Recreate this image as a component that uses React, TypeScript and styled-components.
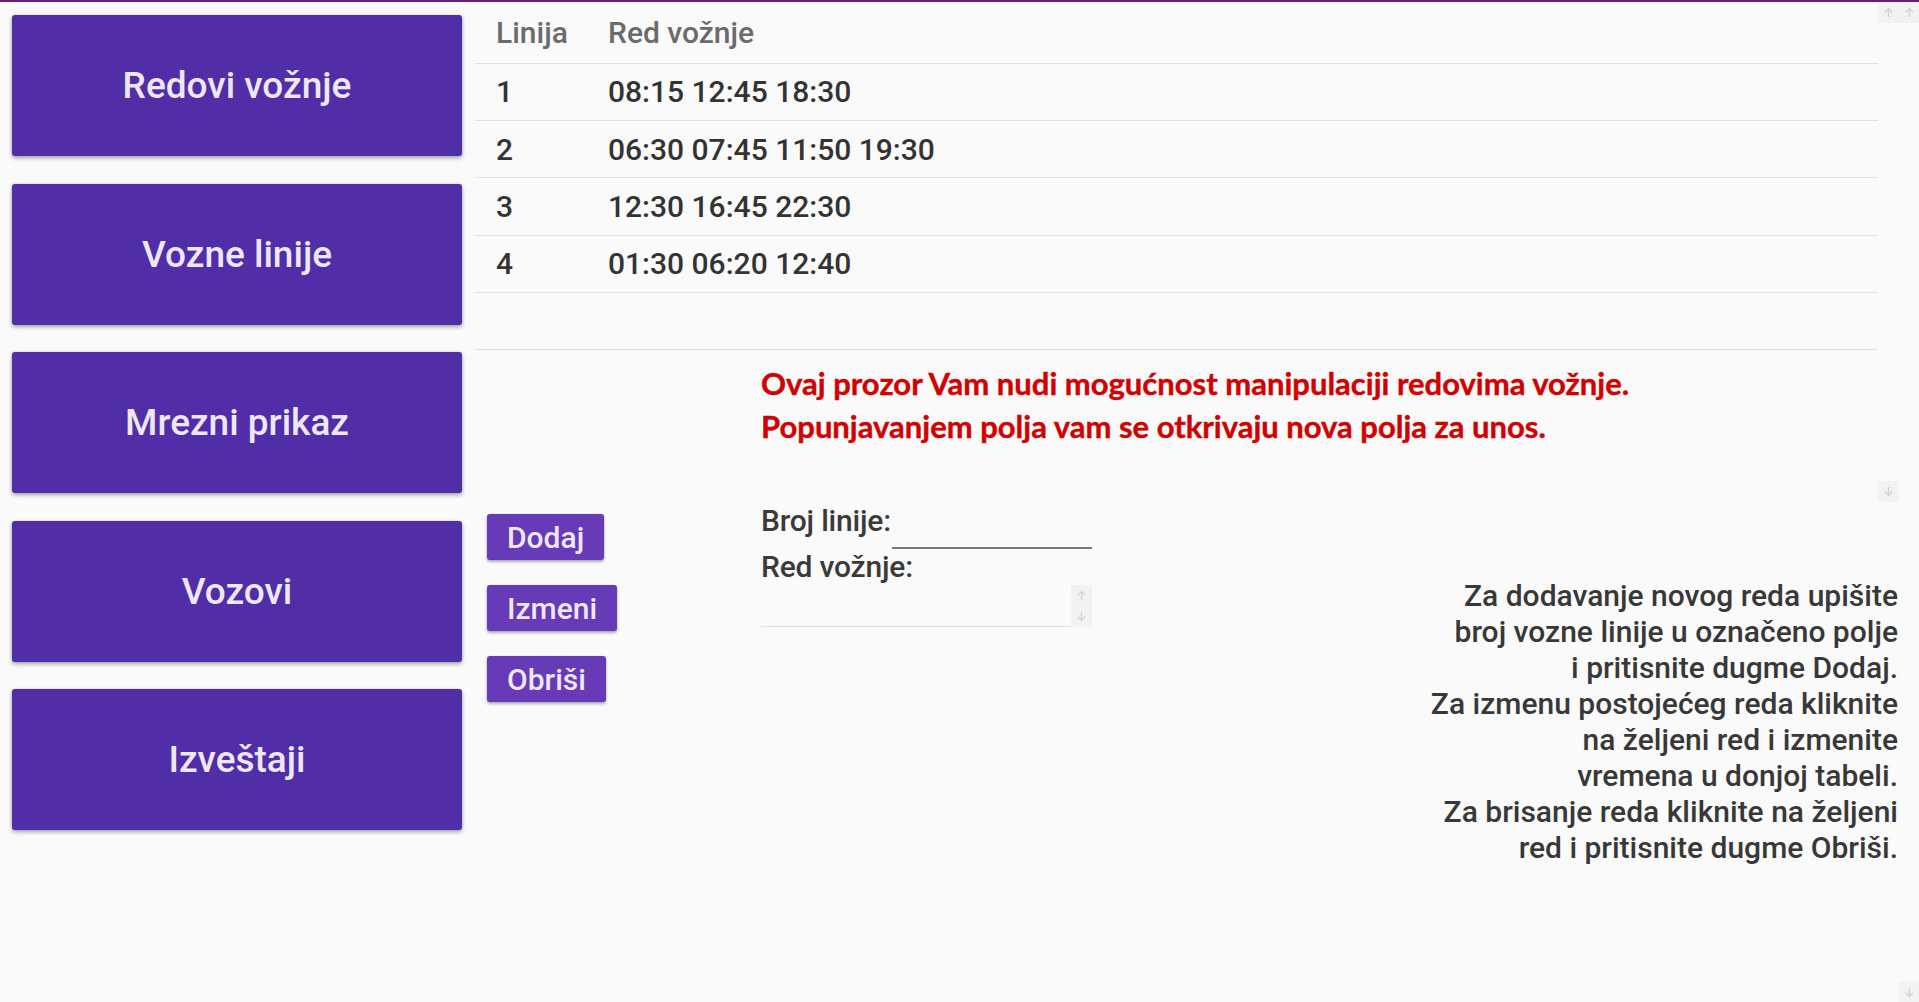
import React from "react";
import styled, { createGlobalStyle } from "styled-components";

const GlobalStyle = createGlobalStyle`
  html, body {
    margin: 0;
    padding: 0;
    background: #fafafa;
    overflow: hidden;
  }
  body {
    font-family: Roboto, "Noto Sans", sans-serif;
  }
  * { box-sizing: border-box; }
`;

const Page = styled.div`
  display: flex;
  height: 1002px;
  border-top: 2px solid #6d1a7a;
  background: #fafafa;
`;

const Main = styled.div`
  flex: 1;
  display: flex;
  min-width: 0;
`;

const Nav = styled.nav`
  width: 462px;
  flex-shrink: 0;
  padding: 13px 0 0 12px;
  display: flex;
  flex-direction: column;
  gap: 27.5px;
`;

const NavButton = styled.button`
  height: 141px;
  border: none;
  border-radius: 3px;
  background: #512da8;
  color: #ede7f6;
  font: 500 37px Roboto, sans-serif;
  box-shadow: 0 2px 4px rgba(0, 0, 0, 0.35), 0 0 2px rgba(0, 0, 0, 0.15);
  cursor: pointer;
`;

const Right = styled.section`
  flex: 1;
  min-width: 0;
  margin-left: 13px;
  display: flex;
  flex-direction: column;
`;

const Top = styled.div`
  display: flex;
  height: 500px;
  flex-shrink: 0;
`;

const TopContent = styled.div`
  flex: 1;
  min-width: 0;
`;

const Table = styled.table`
  width: 100%;
  border-collapse: collapse;
`;

const HeadCell = styled.th<{ $first?: boolean }>`
  text-align: left;
  height: 61px;
  padding: 0 0 0 ${(p) => (p.$first ? "21px" : "0")};
  width: ${(p) => (p.$first ? "133px" : "auto")};
  font: 500 30px Roboto, sans-serif;
  color: #6b6b6b;
  border-bottom: 1px solid #e0e0e0;
`;

const Cell = styled.td<{ $first?: boolean }>`
  height: 57.4px;
  padding: 0 0 0 ${(p) => (p.$first ? "21px" : "0")};
  font: 500 30px Roboto, sans-serif;
  color: #333;
  border-bottom: 1px solid #e0e0e0;
`;

const Notice = styled.p`
  margin: 12px 0 0 286px;
  font: 700 31px/43px Lato, "Open Sans", sans-serif;
  color: #d00000;
  -webkit-text-stroke: 0.4px #d00000;
`;

const Scrollbar = styled.div<{ $width: number }>`
  width: ${(p) => p.$width}px;
  flex-shrink: 0;
  display: flex;
  flex-direction: column;
  justify-content: space-between;
`;

const ScrollButton = styled.div<{ $size: number }>`
  width: 100%;
  height: ${(p) => p.$size}px;
  background: #f2f2f2;
  display: flex;
  align-items: center;
  justify-content: center;
`;

const Bottom = styled.div`
  flex: 1;
  display: flex;
`;

const ButtonCol = styled.div`
  width: 286px;
  flex-shrink: 0;
  padding: 12px 0 0 12px;
  display: flex;
  flex-direction: column;
  align-items: flex-start;
  gap: 25px;
`;

const ActionButton = styled.button`
  height: 46px;
  padding: 0 20px;
  border: none;
  border-radius: 3px;
  background: #673ab7;
  color: #ede7f6;
  font: 500 30px Roboto, sans-serif;
  box-shadow: 0 2px 3px rgba(0, 0, 0, 0.3), 0 0 2px rgba(0, 0, 0, 0.12);
  cursor: pointer;
`;

const FormCol = styled.div`
  width: 331px;
  flex-shrink: 0;
  padding-top: 1px;
  display: flex;
  flex-direction: column;
`;

const FieldRow = styled.div`
  display: flex;
  align-items: flex-start;
`;

const Label = styled.label`
  font: 500 30px Roboto, sans-serif;
  letter-spacing: -0.2px;
  line-height: 36px;
  color: #3a3a3a;
  white-space: nowrap;
`;

const LineInput = styled.input`
  margin-left: auto;
  width: 200px;
  height: 46px;
  border: none;
  border-bottom: 2px solid #777;
  background: transparent;
  outline: none;
  font: 400 26px Roboto, sans-serif;
`;

const AreaBox = styled.div`
  display: flex;
  height: 42px;
`;

const Area = styled.textarea`
  flex: 1;
  border: none;
  border-bottom: 1px solid #e0e0e0;
  background: transparent;
  resize: none;
  outline: none;
  overflow: hidden;
  font: 400 26px Roboto, sans-serif;
`;

const Instructions = styled.p`
  flex: 1;
  margin: 0;
  padding: 76px 1px 0 0;
  text-align: right;
  font: 500 30px Roboto, sans-serif;
  line-height: 36px;
  color: #383838;
`;

const Arrow: React.FC<{ dir: "up" | "down" }> = ({ dir }) => (
  <svg width="11" height="11" viewBox="0 0 11 11" aria-hidden>
    <g
      fill="none"
      stroke="#d4d4d4"
      strokeWidth="1.4"
      transform={dir === "down" ? "rotate(180 5.5 5.5)" : undefined}
    >
      <path d="M5.5 1.5 V10" />
      <path d="M1.8 5.2 L5.5 1.5 L9.2 5.2" />
    </g>
  </svg>
);

const rows = [
  ["1", "08:15 12:45 18:30"],
  ["2", "06:30 07:45 11:50 19:30"],
  ["3", "12:30 16:45 22:30"],
  ["4", "01:30 06:20 12:40"],
  ["", ""],
];

const navItems = ["Redovi vožnje", "Vozne linije", "Mrezni prikaz", "Vozovi", "Izveštaji"];

const helpLines = [
  "Za dodavanje novog reda upišite",
  "broj vozne linije u označeno polje",
  "i pritisnite dugme Dodaj.",
  "Za izmenu postojećeg reda kliknite",
  "na željeni red i izmenite",
  "vremena u donjoj tabeli.",
  "Za brisanje reda kliknite na željeni",
  "red i pritisnite dugme Obriši.",
];

export default function App() {
  return (
    <>
      <GlobalStyle />
      <Page>
        <Main>
          <Nav>
            {navItems.map((n) => (
              <NavButton key={n}>{n}</NavButton>
            ))}
          </Nav>
          <Right>
            <Top>
              <TopContent>
                <Table>
                  <thead>
                    <tr>
                      <HeadCell $first>Linija</HeadCell>
                      <HeadCell>Red vožnje</HeadCell>
                    </tr>
                  </thead>
                  <tbody>
                    {rows.map((r, i) => (
                      <tr key={i}>
                        <Cell $first>{r[0]}</Cell>
                        <Cell>{r[1]}</Cell>
                      </tr>
                    ))}
                  </tbody>
                </Table>
                <Notice>
                  Ovaj prozor Vam nudi mogućnost manipulaciji redovima vožnje.
                  <br />
                  Popunjavanjem polja vam se otkrivaju nova polja za unos.
                </Notice>
              </TopContent>
              <Scrollbar $width={21}>
                <ScrollButton $size={21}>
                  <Arrow dir="up" />
                </ScrollButton>
                <ScrollButton $size={21}>
                  <Arrow dir="down" />
                </ScrollButton>
              </Scrollbar>
            </Top>
            <Bottom>
              <ButtonCol>
                <ActionButton>Dodaj</ActionButton>
                <ActionButton>Izmeni</ActionButton>
                <ActionButton>Obriši</ActionButton>
              </ButtonCol>
              <FormCol>
                <FieldRow>
                  <Label htmlFor="broj">Broj linije:</Label>
                  <LineInput id="broj" />
                </FieldRow>
                <Label htmlFor="red">Red vožnje:</Label>
                <AreaBox>
                  <Area id="red" />
                  <Scrollbar $width={21}>
                    <ScrollButton $size={21}>
                      <Arrow dir="up" />
                    </ScrollButton>
                    <ScrollButton $size={21}>
                      <Arrow dir="down" />
                    </ScrollButton>
                  </Scrollbar>
                </AreaBox>
              </FormCol>
              <Instructions>
                {helpLines.map((l, i) => (
                  <React.Fragment key={i}>
                    {l}
                    {i < helpLines.length - 1 && <br />}
                  </React.Fragment>
                ))}
              </Instructions>
            </Bottom>
          </Right>
        </Main>
        <Scrollbar $width={20}>
          <ScrollButton $size={21}>
            <Arrow dir="up" />
          </ScrollButton>
          <ScrollButton $size={20}>
            <Arrow dir="down" />
          </ScrollButton>
        </Scrollbar>
      </Page>
    </>
  );
}
